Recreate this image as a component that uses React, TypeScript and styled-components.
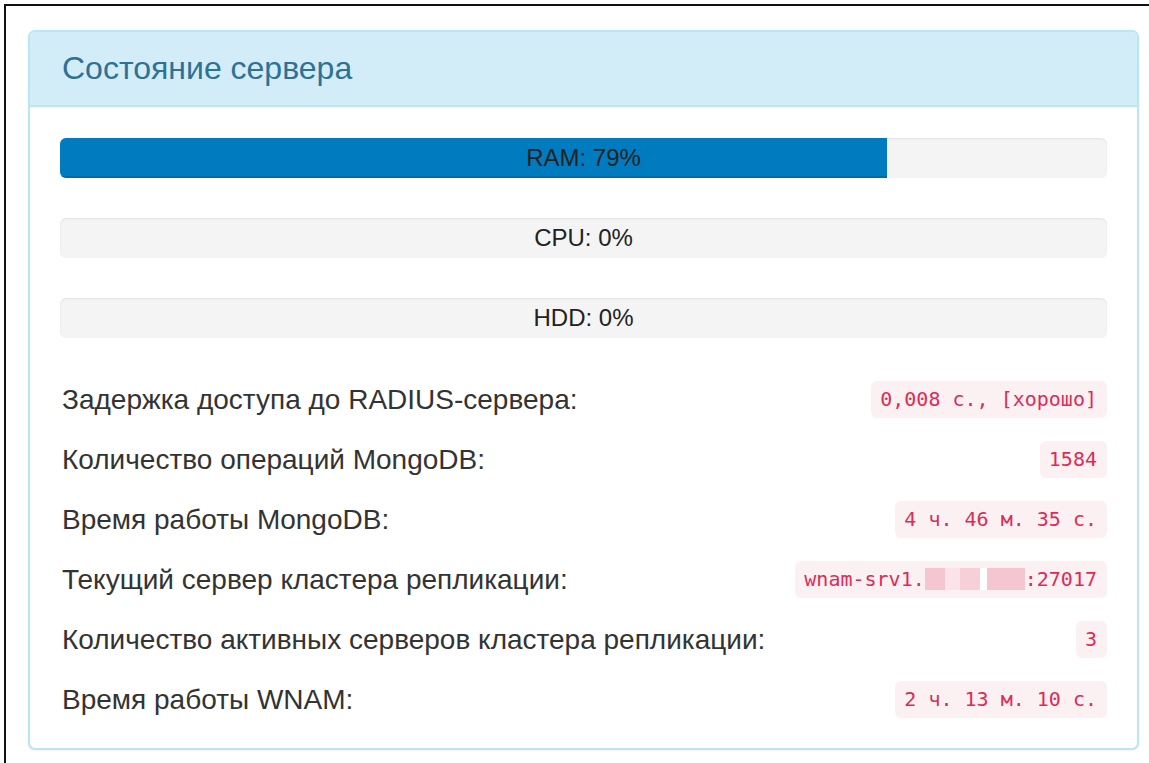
import styled, { createGlobalStyle } from "styled-components";

const GlobalStyle = createGlobalStyle`
  html, body {
    margin: 0;
    padding: 0;
    background: #fff;
  }
  body {
    font-family: "Liberation Sans", Arial, sans-serif;
    color: #333;
  }
`;

const Frame = styled.div`
  margin: 4px 0 0 4px;
  min-height: 759px;
  box-sizing: border-box;
  border-top: 2px solid #111;
  border-left: 2px solid #111;
  padding: 24px 8px 0 22px;
`;

const Panel = styled.section`
  width: 1111px;
  box-sizing: border-box;
  border: 2px solid #b6e7f2;
  border-radius: 7px;
  background: #fff;
  box-shadow: 0 1px 2px rgba(0, 0, 0, 0.05);
  overflow: hidden;
`;

const PanelHeading = styled.div`
  height: 75px;
  box-sizing: border-box;
  display: flex;
  align-items: center;
  padding: 0 32px 0;
  background: #d2edf7;
  border-bottom: 2px solid #b6e7f2;
`;

const PanelTitle = styled.h3`
  margin: 0;
  font-size: 32px;
  font-weight: 400;
  color: #2f7195;
`;

const PanelBody = styled.div`
  padding: 31px 30px 30px 30px;
  display: flex;
  flex-direction: column;
`;

const Progress = styled.div`
  position: relative;
  height: 40px;
  margin-bottom: 40px;
  border-radius: 6px;
  background: #f4f4f4;
  box-shadow: inset 0 1px 2px rgba(0, 0, 0, 0.08);
  overflow: hidden;
`;

const ProgressFill = styled.div`
  height: 100%;
  background: #007bbf;
  box-shadow: inset 0 -2px 0 rgba(0, 0, 0, 0.12);
`;

const ProgressLabel = styled.span`
  position: absolute;
  inset: 0;
  display: flex;
  align-items: center;
  justify-content: center;
  padding-bottom: 1px;
  font-size: 24px;
  color: #222;
`;

const StatList = styled.div`
  display: flex;
  flex-direction: column;
  gap: 22px;
  margin-top: 2px;
`;

const StatRow = styled.div`
  display: flex;
  align-items: center;
  justify-content: space-between;
  height: 38px;
`;

const StatLabel = styled.span`
  padding: 2px 0 0 2px;
  font-size: 28px;
  color: #333;
`;

const Code = styled.code`
  display: inline-flex;
  align-items: center;
  height: 37px;
  box-sizing: border-box;
  padding: 0 10px 0 9px;
  border-radius: 6px;
  background: #fbf1f3;
  color: #de2b57;
  font-family: "DejaVu Sans Mono", "Liberation Mono", monospace;
  font-size: 20px;
`;

const Masked = styled.span`
  display: inline-block;
  width: 100px;
  height: 22px;
  background: linear-gradient(90deg, #f4c6d1 0 20%, #fbe3e9 20% 35%, #f6cfd8 35% 55%, #fff 55% 62%, #f4c6d1 62% 100%);
`;

const bars = [
  { name: "RAM", value: 79 },
  { name: "CPU", value: 0 },
  { name: "HDD", value: 0 },
];

export default function App() {
  return (
    <>
      <GlobalStyle />
      <Frame>
        <Panel>
          <PanelHeading>
            <PanelTitle>Состояние сервера</PanelTitle>
          </PanelHeading>
          <PanelBody>
            {bars.map((b) => (
              <Progress key={b.name}>
                <ProgressFill style={{ width: `${b.value}%` }} />
                <ProgressLabel>
                  {b.name}: {b.value}%
                </ProgressLabel>
              </Progress>
            ))}
            <StatList>
              <StatRow>
                <StatLabel>Задержка доступа до RADIUS-сервера:</StatLabel>
                <Code>0,008 с., [хорошо]</Code>
              </StatRow>
              <StatRow>
                <StatLabel>Количество операций MongoDB:</StatLabel>
                <Code>1584</Code>
              </StatRow>
              <StatRow>
                <StatLabel>Время работы MongoDB:</StatLabel>
                <Code>4 ч. 46 м. 35 с.</Code>
              </StatRow>
              <StatRow>
                <StatLabel>Текущий сервер кластера репликации:</StatLabel>
                <Code>
                  wnam-srv1.
                  <Masked />
                  :27017
                </Code>
              </StatRow>
              <StatRow>
                <StatLabel>Количество активных серверов кластера репликации:</StatLabel>
                <Code>3</Code>
              </StatRow>
              <StatRow>
                <StatLabel>Время работы WNAM:</StatLabel>
                <Code>2 ч. 13 м. 10 с.</Code>
              </StatRow>
            </StatList>
          </PanelBody>
        </Panel>
      </Frame>
    </>
  );
}
